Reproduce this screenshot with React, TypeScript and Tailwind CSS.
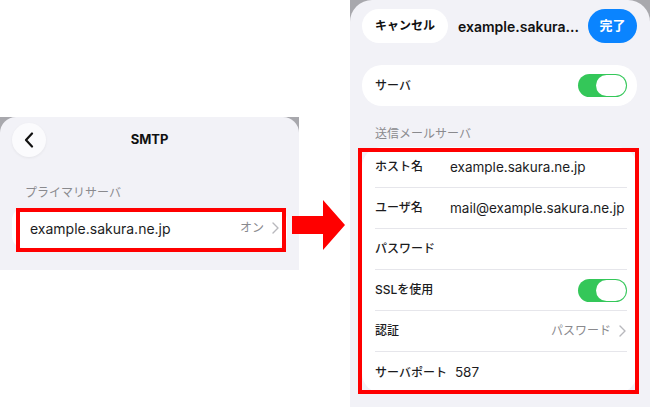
import React from "react";

const Toggle = () => (
  <div className="w-[49px] h-[23px] rounded-full bg-[#34c759] flex items-center justify-end pr-[1px]">
    <div className="w-[30px] h-[21px] rounded-full bg-white" />
  </div>
);

const Chevron = () => (
  <svg width="7" height="12" viewBox="0 0 7 12" className="ml-[8px]">
    <path d="M1 1l5 5-5 5" fill="none" stroke="#b8b8bd" strokeWidth="1.4" strokeLinecap="round" strokeLinejoin="round" />
  </svg>
);

const Row = ({ label, value, last, right }: { label: string; value?: string; last?: boolean; right?: React.ReactNode }) => (
  <div className={`h-[41px] flex items-center ${last ? "" : "border-b border-[#e6e6eb]"}`}>
    <span className="min-w-[67px] text-[12px] font-medium text-[#1c1c1e]">{label}</span>
    {value && <span className="ml-[8px] text-[13.5px] text-[#1c1c1e] whitespace-nowrap">{value}</span>}
    <div className="flex-1" />
    {right}
  </div>
);

export default function App() {
  return (
    <div className="w-[650px] h-[407px] bg-white flex overflow-hidden font-['Inter','Noto_Sans_CJK_JP',sans-serif]">
      {/* Left panel */}
      <div className="w-[299px] shrink-0 mt-[117px] h-[153px] bg-[#a8a8ad]">
        <div className="h-full rounded-t-[16px] bg-[#f2f2f7] flex flex-col">
          <div className="mt-[6px] h-[34px] flex items-center px-[12px]">
            <div className="w-[34px] h-[34px] rounded-full bg-[#fbfbfd] flex items-center justify-center shadow-[0_1px_3px_rgba(0,0,0,0.06)]">
              <svg width="10" height="16" viewBox="0 0 10 16">
                <path d="M8 1.5L2 8l6 6.5" fill="none" stroke="#111" strokeWidth="2.2" strokeLinecap="round" strokeLinejoin="round" />
              </svg>
            </div>
            <div className="flex-1 text-center text-[13px] font-bold text-[#111]">SMTP</div>
            <div className="w-[34px]" />
          </div>
          <div className="mt-[28px] pl-[25px] text-[12px] leading-[16px] text-[#8a8a8e]">プライマリサーバ</div>
          <div className="relative mt-[7px] mx-[12px] h-[40px]">
            <div className="h-full rounded-[12px] bg-white flex items-center pl-[18px] pr-[8px]">
              <span className="text-[14px] text-[#1c1c1e]">example.sakura.ne.jp</span>
              <div className="flex-1" />
              <span className="text-[12px] text-[#8a8a8e]">オン</span>
              <Chevron />
            </div>
            <div className="absolute left-[4px] top-0 w-[270px] h-[44px] border-[4px] border-[#ff0000]" />
          </div>
        </div>
      </div>

      {/* Arrow */}
      <div className="w-[51px] shrink-0 relative">
        <svg width="54" height="52" viewBox="0 0 54 52" className="absolute left-[-7px] top-[200px]">
          <polygon points="0,16 31,16 31,0 53,25 31,50 31,34 0,34" fill="#ff0000" />
        </svg>
      </div>

      {/* Right panel */}
      <div className="w-[300px] shrink-0 h-[407px] bg-[#a8a8ad]">
        <div className="h-full rounded-t-[22px] bg-[#f2f2f7] pl-[12px] pr-[13px] flex flex-col">
          <div className="mt-[9px] h-[34px] flex items-center">
            <div className="w-[86px] h-[34px] rounded-full bg-white flex items-center justify-center text-[12px] font-bold text-[#111]">
              キャンセル
            </div>
            <div className="ml-[10px] flex-1 text-[14px] font-semibold text-[#111] whitespace-nowrap">example.sakura...</div>
            <div className="w-[49px] h-[34px] rounded-full bg-[#0a84ff] flex items-center justify-center text-[13px] font-bold text-white">
              完了
            </div>
          </div>

          <div className="mt-[22px] h-[41px] rounded-[20px] bg-white flex items-center pl-[13px] pr-[10px]">
            <span className="text-[12px] font-medium text-[#1c1c1e]">サーバ</span>
            <div className="flex-1" />
            <Toggle />
          </div>

          <div className="mt-[20px] pl-[13px] text-[12px] leading-[16px] text-[#8a8a8e]">送信メールサーバ</div>

          <div className="relative mt-[5px]">
            <div className="rounded-[20px] bg-white pl-[13px] pr-[10px]">
              <Row label="ホスト名" value="example.sakura.ne.jp" />
              <Row label="ユーザ名" value="mail@example.sakura.ne.jp" />
              <Row label="パスワード" />
              <Row label="SSLを使用" right={<Toggle />} />
              <Row
                label="認証"
                right={
                  <div className="flex items-center mr-[1px]">
                    <span className="text-[12px] text-[#8a8a8e]">パスワード</span>
                    <Chevron />
                  </div>
                }
              />
              <Row label="サーバポート" value="587" last />
            </div>
            <div className="absolute left-[-4px] top-[1px] w-[281px] h-[246px] border-[4px] border-[#ff0000]" />
          </div>
        </div>
      </div>
    </div>
  );
}
